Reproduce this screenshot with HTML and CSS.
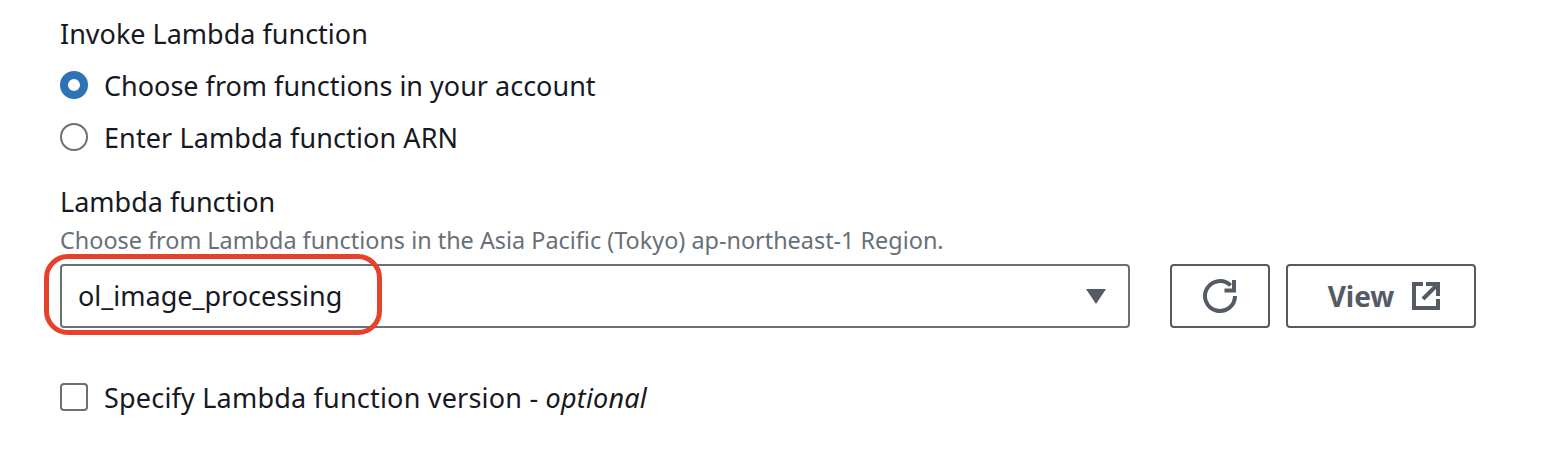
FILE: index.html
```html
<!DOCTYPE html>
<html lang="en">
<head>
    <meta charset="UTF-8">
    <meta name="viewport" content="width=device-width, initial-scale=1.0">
    <title>Invoke Lambda function</title>
    <link rel="stylesheet" href="styles.css">
</head>
<body>
    <div class="form">
        <div class="label">Invoke Lambda function</div>
        <div class="radios">
            <div class="option">
                <span class="radio radio-on"></span>
                <span>Choose from functions in your account</span>
            </div>
            <div class="option">
                <span class="radio"></span>
                <span class="arn-text">Enter Lambda function ARN</span>
            </div>
        </div>

        <div class="label label-second">Lambda function</div>
        <div class="hint">Choose from Lambda functions in the Asia Pacific (Tokyo) ap-northeast-1 Region.</div>
        <div class="picker">
            <div class="select">
                <span class="select-value">ol_image_processing</span>
                <span class="caret"></span>
                <span class="highlight"></span>
            </div>
            <button class="btn btn-refresh" aria-label="Refresh">
                <svg width="36" height="36" viewBox="0 0 36 36" fill="none" stroke="#545b64" stroke-width="4">
                    <path d="M33 18a15 15 0 1 1-4.4-10.6"/>
                    <path d="M32 2v10.5H22.5"/>
                </svg>
            </button>
            <button class="btn btn-view">
                <span>View</span>
                <svg width="28" height="28" viewBox="0 0 28 28" fill="none" stroke="#545b64" stroke-width="4">
                    <path d="M11 2H2v24h24v-9"/>
                    <path d="M14 2h12v12"/>
                    <path d="M26 2 11 17"/>
                </svg>
            </button>
        </div>

        <div class="option option-check">
            <span class="check"></span>
            <span class="check-text">Specify Lambda function version - <em>optional</em></span>
        </div>
    </div>
</body>
</html>
```

FILE: styles.css
```css
body {
    font-family: "Noto Sans", Arial, sans-serif;
    margin: 0;
    background: #fff;
    color: #16191f;
    font-size: 27px;
}
.form {
    padding: 15px 0 0 60px;
    width: 1416px;
}
.label {
    line-height: 38px;
}
.radios {
    margin-top: 6px;
}
.option {
    display: flex;
    align-items: center;
    gap: 16px;
    height: 52px;
}
.radio {
    width: 24px;
    height: 24px;
    border: 2px solid #687078;
    border-radius: 50%;
    background: #fff;
}
.radio-on {
    width: 12px;
    height: 12px;
    border: 8px solid #2e72b8;
}
.arn-text {
    letter-spacing: 0.1px;
}
.label-second {
    margin-top: 20px;
}
.hint {
    font-size: 23.4px;
    line-height: 30px;
    color: #687078;
    margin-top: 4px;
}
.picker {
    display: flex;
    margin-top: 9px;
}
.select {
    position: relative;
    box-sizing: border-box;
    width: 1070px;
    height: 64px;
    border: 2px solid #687078;
    border-radius: 4px;
    padding: 0 22px 0 16px;
    display: flex;
    align-items: center;
    justify-content: space-between;
}
.select-value {
    margin-bottom: 2px;
}
.caret {
    width: 0;
    height: 0;
    border-left: 10px solid transparent;
    border-right: 10px solid transparent;
    border-top: 15px solid #545b64;
}
.highlight {
    position: absolute;
    left: -18px;
    top: -12px;
    width: 338px;
    height: 81px;
    box-sizing: border-box;
    border: 5px solid #e8412a;
    border-radius: 24px;
}
.btn {
    box-sizing: border-box;
    height: 64px;
    border: 2px solid #545b64;
    border-radius: 4px;
    background: #fff;
    color: #545b64;
    font-family: inherit;
    font-size: 28px;
    font-weight: 700;
    display: flex;
    align-items: center;
    justify-content: center;
    padding: 0;
}
.btn-refresh {
    width: 100px;
    margin-left: 40px;
}
.btn-view {
    width: 190px;
    margin-left: 16px;
    gap: 18px;
    padding-left: 6px;
}
.option-check {
    margin-top: 43px;
}
.check {
    box-sizing: border-box;
    width: 28px;
    height: 28px;
    border: 2px solid #687078;
    border-radius: 4px;
}
.check-text {
    letter-spacing: 0.2px;
}
```
